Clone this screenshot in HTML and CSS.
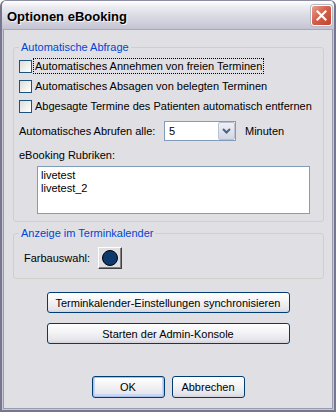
FILE: index.html
```html
<!DOCTYPE html>
<html lang="de">
<head>
    <meta charset="UTF-8">
    <meta name="viewport" content="width=device-width, initial-scale=1.0">
    <title>Optionen eBooking</title>
    <link rel="stylesheet" href="styles.css">
</head>
<body>
    <div class="window">
        <div class="titlebar">
            <span class="title">Optionen eBooking</span>
            <button class="close" type="button" aria-label="Schließen">
                <svg width="11" height="11" viewBox="0 0 11 11">
                    <path d="M1.5 1.5 L9.5 9.5 M9.5 1.5 L1.5 9.5" stroke="#fff" stroke-width="2.2" stroke-linecap="square" fill="none"/>
                </svg>
            </button>
        </div>

        <div class="client">
            <!-- Automatische Abfrage -->
            <fieldset class="group group-abfrage">
                <legend>Automatische Abfrage</legend>

                <label class="check">
                    <span class="box"></span>
                    <span class="check-text focused">Automatisches Annehmen von freien Terminen</span>
                </label>
                <label class="check">
                    <span class="box"></span>
                    <span class="check-text">Automatisches Absagen von belegten Terminen</span>
                </label>
                <label class="check">
                    <span class="box"></span>
                    <span class="check-text">Abgesagte Termine des Patienten automatisch entfernen</span>
                </label>

                <div class="interval">
                    <span class="interval-label">Automatisches Abrufen alle:</span>
                    <div class="combo">
                        <span class="combo-value">5</span>
                        <span class="combo-btn">
                            <svg width="9" height="6" viewBox="0 0 9 6">
                                <path d="M1 1 L4.5 4.5 L8 1" stroke="#4d6185" stroke-width="2" fill="none"/>
                            </svg>
                        </span>
                    </div>
                    <span class="interval-unit">Minuten</span>
                </div>

                <div class="list-label">eBooking Rubriken:</div>
                <div class="listbox">
                    <div class="list-item">livetest</div>
                    <div class="list-item">livetest_2</div>
                </div>
            </fieldset>

            <!-- Anzeige im Terminkalender -->
            <fieldset class="group group-anzeige">
                <legend>Anzeige im Terminkalender</legend>
                <div class="color-row">
                    <span class="color-label">Farbauswahl:</span>
                    <button class="color-btn" type="button"><span class="dot"></span></button>
                </div>
            </fieldset>

            <div class="actions">
                <button class="btn btn-wide" type="button">Terminkalender-Einstellungen synchronisieren</button>
                <button class="btn btn-wide" type="button">Starten der Admin-Konsole</button>
            </div>

            <div class="footer">
                <button class="btn btn-small btn-default" type="button">OK</button>
                <button class="btn btn-small" type="button">Abbrechen</button>
            </div>
        </div>
    </div>
</body>
</html>
```

FILE: styles.css
```css
* {
    box-sizing: border-box;
}

body {
    margin: 0;
    font-family: "Liberation Sans", Arial, sans-serif;
    font-size: 11px;
    color: #000;
    background: #fff;
}

.window {
    width: 336px;
    height: 412px;
    display: flex;
    flex-direction: column;
    background: #e0dfe3;
    border: 2px solid #76768f;
    border-top: 1px solid #8c8ca2;
    border-radius: 6px 6px 0 0;
    overflow: hidden;
}

/* title bar */
.titlebar {
    height: 28px;
    flex-shrink: 0;
    display: flex;
    align-items: center;
    justify-content: space-between;
    padding: 0 2px 0 5px;
    background: linear-gradient(to bottom, #ffffff 0%, #ececf2 20%, #dcdce5 50%, #cfcfdb 80%, #c2c2d1 100%);
}

.title {
    font-weight: bold;
    font-size: 13px;
    padding-top: 3px;
    text-shadow: 1px 1px 0 #f4f4f8;
}

.close {
    width: 21px;
    height: 21px;
    padding: 0;
    margin-top: 1px;
    display: flex;
    align-items: center;
    justify-content: center;
    border: 1px solid #fff;
    border-radius: 3px;
    background: linear-gradient(135deg, #e9a08f 0%, #d4614b 45%, #c0442f 100%);
    box-shadow: 0 0 0 1px #b8b8c8;
}

/* client area */
.client {
    flex: 1;
    border: 1px solid #c8c8d6;
    border-top-color: #a9a9bd;
    box-shadow: inset 1px 0 0 #9b9bb0, inset -1px 0 0 #9b9bb0, inset 0 -1px 0 #9b9bb0;
    padding: 11px 0 0;
}

.group {
    margin: 0 9px 0 10px;
    border: 1px solid #d0d0c8;
    border-radius: 3px;
    padding: 2px 5px 7px;
    min-width: 0;
}

.group legend {
    padding: 0 2px;
    line-height: 13px;
    color: #0046d5;
}

/* checkboxes */
.check {
    display: flex;
    align-items: center;
    gap: 2px;
    height: 20px;
}

.box {
    width: 13px;
    height: 13px;
    flex-shrink: 0;
    border: 1px solid #1c5180;
    background: linear-gradient(135deg, #dcdcd7 0%, #f2f2ef 60%, #ffffff 100%);
}

.check-text {
    padding: 0 1px;
    line-height: 14px;
    white-space: nowrap;
}

.focused {
    outline: 1px dotted #000;
}

/* interval row */
.interval {
    display: flex;
    align-items: center;
    height: 20px;
    margin-top: 5px;
}

.interval-label {
    width: 145px;
}

.combo {
    width: 72px;
    height: 20px;
    display: flex;
    align-items: center;
    border: 1px solid #7f9db9;
    background: #fff;
}

.combo-value {
    flex: 1;
    padding-left: 4px;
}

.combo-btn {
    width: 17px;
    height: 18px;
    display: flex;
    align-items: center;
    justify-content: center;
    border: 1px solid #bac1d4;
    border-radius: 2px;
    background: linear-gradient(to bottom, #eef0f6, #d3d7e4);
}

.interval-unit {
    margin-left: 9px;
}

/* rubriken list */
.list-label {
    line-height: 13px;
    margin-top: 8px;
}

.listbox {
    width: 273px;
    height: 48px;
    margin: 4px 0 0 18px;
    padding: 2px 3px;
    border: 1px solid #7f9db9;
    background: #fff;
}

.list-item {
    line-height: 13px;
}

/* colour group */
.group-anzeige {
    margin-top: 5px;
    padding-top: 7px;
    padding-bottom: 9px;
}

.color-row {
    display: flex;
    align-items: center;
    height: 22px;
    padding-left: 5px;
}

.color-label {
    width: 74px;
}

.color-btn {
    width: 24px;
    height: 22px;
    padding: 0;
    display: flex;
    align-items: center;
    justify-content: center;
    background: #e0dfe3;
    border: 1px solid;
    border-color: #fff #404040 #404040 #fff;
    box-shadow: inset -1px -1px 0 #808080;
}

.dot {
    width: 16px;
    height: 16px;
    border-radius: 50%;
    border: 1px solid #000;
    background: #0c3a6d;
}

/* buttons */
.btn {
    font-family: inherit;
    font-size: 11px;
    color: #000;
    padding: 0;
    border: 1px solid #003c74;
    border-radius: 3px;
    background: linear-gradient(to bottom, #ffffff 0%, #f3f3f6 45%, #e4e4ea 85%, #d3d3dc 100%);
}

.actions {
    display: flex;
    flex-direction: column;
    align-items: center;
    gap: 10px;
    margin-top: 13px;
}

.btn-wide {
    width: 243px;
    height: 21px;
}

.footer {
    display: flex;
    justify-content: center;
    gap: 7px;
    margin-top: 32px;
}

.btn-small {
    width: 73px;
    height: 22px;
}

.btn-default {
    box-shadow: inset 0 0 0 1px #a9c1ec, inset 0 -1px 0 2px #c8d7f3;
}
```
